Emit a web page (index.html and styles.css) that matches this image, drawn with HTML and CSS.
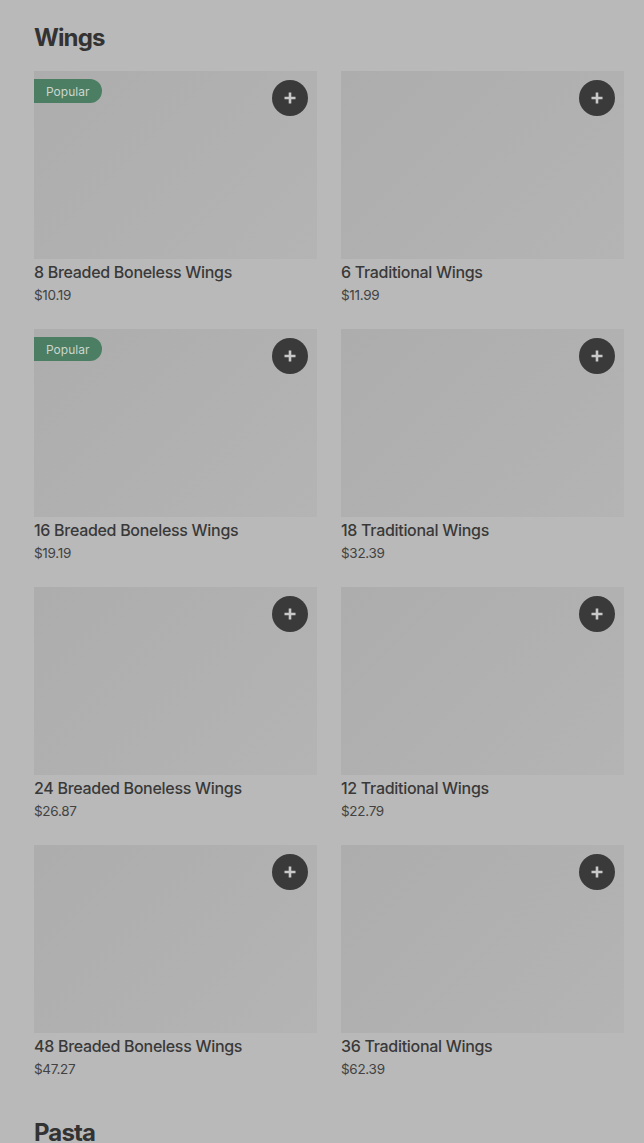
FILE: index.html
```html
<!DOCTYPE html>
<html lang="en">
<head>
<meta charset="utf-8">
<title>Menu</title>
<link rel="stylesheet" href="styles.css">
</head>
<body>
<main class="menu">
  <section class="category">
    <h2 class="category-title">Wings</h2>
    <div class="grid">
      <article class="item">
        <div class="thumb">
          <span class="badge">Popular</span>
          <button class="add" aria-label="Add"><svg viewBox="0 0 16 16" width="16" height="16"><path d="M8 2.5v11M2.5 8h11" stroke="currentColor" stroke-width="2.6" fill="none"/></svg></button>
        </div>
        <h3 class="item-name">8 Breaded Boneless Wings</h3>
        <p class="item-price">$10.19</p>
      </article>
      <article class="item">
        <div class="thumb">
          <button class="add" aria-label="Add"><svg viewBox="0 0 16 16" width="16" height="16"><path d="M8 2.5v11M2.5 8h11" stroke="currentColor" stroke-width="2.6" fill="none"/></svg></button>
        </div>
        <h3 class="item-name">6 Traditional Wings</h3>
        <p class="item-price">$11.99</p>
      </article>
      <article class="item">
        <div class="thumb">
          <span class="badge">Popular</span>
          <button class="add" aria-label="Add"><svg viewBox="0 0 16 16" width="16" height="16"><path d="M8 2.5v11M2.5 8h11" stroke="currentColor" stroke-width="2.6" fill="none"/></svg></button>
        </div>
        <h3 class="item-name">16 Breaded Boneless Wings</h3>
        <p class="item-price">$19.19</p>
      </article>
      <article class="item">
        <div class="thumb">
          <button class="add" aria-label="Add"><svg viewBox="0 0 16 16" width="16" height="16"><path d="M8 2.5v11M2.5 8h11" stroke="currentColor" stroke-width="2.6" fill="none"/></svg></button>
        </div>
        <h3 class="item-name">18 Traditional Wings</h3>
        <p class="item-price">$32.39</p>
      </article>
      <article class="item">
        <div class="thumb">
          <button class="add" aria-label="Add"><svg viewBox="0 0 16 16" width="16" height="16"><path d="M8 2.5v11M2.5 8h11" stroke="currentColor" stroke-width="2.6" fill="none"/></svg></button>
        </div>
        <h3 class="item-name">24 Breaded Boneless Wings</h3>
        <p class="item-price">$26.87</p>
      </article>
      <article class="item">
        <div class="thumb">
          <button class="add" aria-label="Add"><svg viewBox="0 0 16 16" width="16" height="16"><path d="M8 2.5v11M2.5 8h11" stroke="currentColor" stroke-width="2.6" fill="none"/></svg></button>
        </div>
        <h3 class="item-name">12 Traditional Wings</h3>
        <p class="item-price">$22.79</p>
      </article>
      <article class="item">
        <div class="thumb">
          <button class="add" aria-label="Add"><svg viewBox="0 0 16 16" width="16" height="16"><path d="M8 2.5v11M2.5 8h11" stroke="currentColor" stroke-width="2.6" fill="none"/></svg></button>
        </div>
        <h3 class="item-name">48 Breaded Boneless Wings</h3>
        <p class="item-price">$47.27</p>
      </article>
      <article class="item">
        <div class="thumb">
          <button class="add" aria-label="Add"><svg viewBox="0 0 16 16" width="16" height="16"><path d="M8 2.5v11M2.5 8h11" stroke="currentColor" stroke-width="2.6" fill="none"/></svg></button>
        </div>
        <h3 class="item-name">36 Traditional Wings</h3>
        <p class="item-price">$62.39</p>
      </article>
    </div>
  </section>
  <section class="category">
    <h2 class="category-title">Pasta</h2>
  </section>
</main>
</body>
</html>
```

FILE: styles.css
```css
html, body {
  margin: 0;
  padding: 0;
  background: #b9b9b9;
  font-family: Inter, "Liberation Sans", sans-serif;
  color: #363636;
}

.menu {
  padding: 22px 20px 0 34px;
  display: flex;
  flex-direction: column;
  gap: 38px;
}

.category-title {
  margin: 0 0 17px;
  font-size: 24px;
  line-height: 32px;
  font-weight: 700;
  letter-spacing: -0.9px;
  color: #333333;
}

.grid {
  display: grid;
  grid-template-columns: 283px 283px;
  column-gap: 24px;
  row-gap: 24px;
}

.item {
  display: flex;
  flex-direction: column;
}

.thumb {
  position: relative;
  height: 188px;
  background: linear-gradient(135deg, #adadad 0%, #b1b1b1 60%, #b4b4b4 100%);
}

.badge {
  position: absolute;
  left: 0;
  top: 8px;
  height: 24px;
  padding: 0 13px 0 12px;
  display: flex;
  align-items: center;
  background: #4b7e62;
  color: #cad6cf;
  font-size: 12px;
  border-radius: 0 12px 12px 0;
}

.add {
  position: absolute;
  top: 9px;
  right: 9px;
  width: 36px;
  height: 36px;
  border: 0;
  padding: 0;
  border-radius: 50%;
  background: #3a3a3a;
  color: #c9c9c9;
  display: flex;
  align-items: center;
  justify-content: center;
}

.item-name {
  margin: 3px 0 0;
  font-size: 16px;
  line-height: 20px;
  font-weight: 500;
  letter-spacing: -0.3px;
  color: #393939;
}

.item-price {
  margin: 3px 0 0;
  font-size: 13.5px;
  line-height: 20px;
  letter-spacing: -0.3px;
  color: #424242;
}
```
